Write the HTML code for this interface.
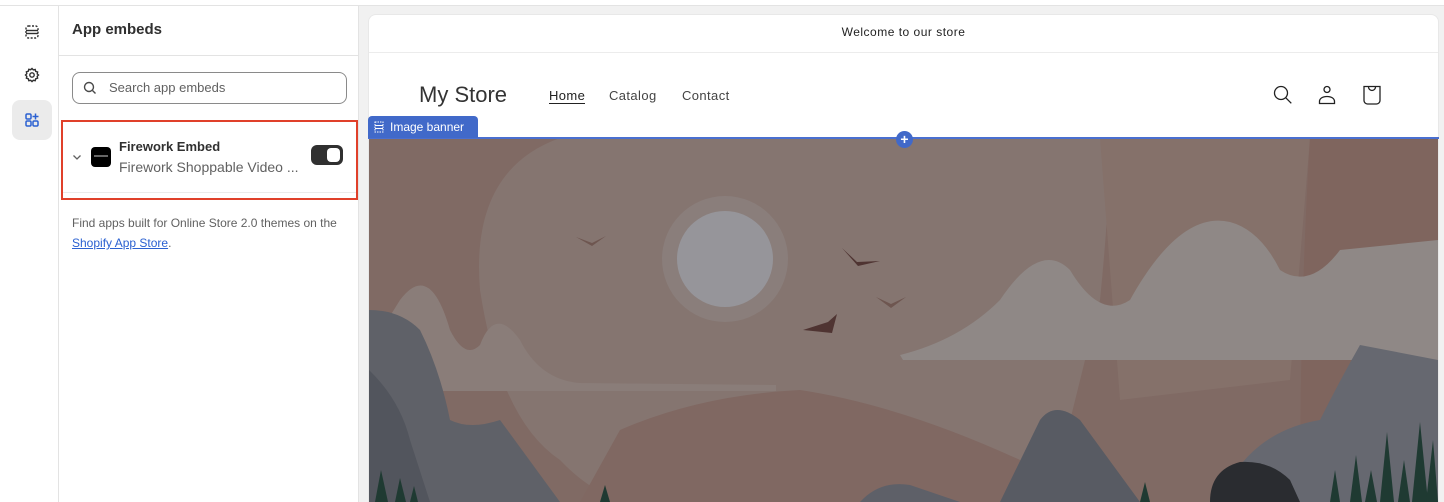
<!DOCTYPE html>
<html><head><meta charset="utf-8"><style>
*{box-sizing:border-box;margin:0;padding:0}
html,body{width:1444px;height:502px;overflow:hidden}
body{background:#f1f1f1;font-family:"Liberation Sans",sans-serif;position:relative}
.abs{position:absolute}
</style></head><body>
<div class="abs" style="left:0;top:0;width:1444px;height:6px;background:#fff;border-bottom:1px solid #e3e3e3"></div>
<!-- rail -->
<div class="abs" style="left:0;top:6px;width:59px;height:496px;background:#fff;border-right:1px solid #e3e3e3"></div>
<svg class="abs" style="left:24px;top:24px" width="16" height="16" viewBox="0 0 16 16" fill="none" stroke="#303030" stroke-width="1.4"><rect x="2" y="2" width="12" height="12" rx="2.5" stroke-dasharray="2 1.5"/><line x1="2" y1="6.5" x2="14" y2="6.5"/><line x1="2" y1="9.5" x2="14" y2="9.5"/></svg>
<svg class="abs" style="left:24px;top:67px" width="16" height="16" viewBox="0 0 16 16" fill="none" stroke="#303030" stroke-width="1.4"><path d="M8 1.5l1.3 1.4 1.9-.4.5 1.9 1.9.6-.4 1.9L14.5 8l-1.3 1.3.4 1.9-1.9.6-.5 1.9-1.9-.4L8 14.5l-1.3-1.2-1.9.4-.5-1.9-1.9-.6.4-1.9L1.5 8l1.3-1.3-.4-1.9 1.9-.6.5-1.9 1.9.4z"/><circle cx="8" cy="8" r="2.2"/></svg>
<div class="abs" style="left:12px;top:100px;width:40px;height:40px;border-radius:8px;background:#ebebeb"></div>
<svg class="abs" style="left:24px;top:112px" width="16" height="16" viewBox="0 0 16 16" fill="none" stroke="#2b61d1" stroke-width="1.5"><rect x="2" y="2" width="5" height="5" rx="1.2"/><rect x="2" y="9" width="5" height="5" rx="1.2"/><rect x="9" y="9" width="5" height="5" rx="1.2"/><path d="M11.5 1.5v6M8.5 4.5h6"/></svg>
<!-- panel -->
<div class="abs" style="left:59px;top:6px;width:300px;height:496px;background:#fff;border-right:1px solid #e3e3e3"></div>
<div class="abs" style="left:72px;top:21px;font-size:15px;font-weight:bold;color:#303030">App embeds</div>
<div class="abs" style="left:59px;top:55px;width:300px;height:1px;background:#e3e3e3"></div>
<div class="abs" style="left:72px;top:72px;width:275px;height:32px;border:1px solid #8a8a8a;border-radius:8px;"></div>
<svg class="abs" style="left:82px;top:80px" width="16" height="16" viewBox="0 0 16 16" fill="none" stroke="#4a4a4a" stroke-width="1.4"><circle cx="7" cy="7" r="4.5"/><path d="M10.5 10.5l3 3"/></svg>
<div class="abs" style="left:109px;top:80px;font-size:13px;color:#616161">Search app embeds</div>
<div class="abs" style="left:61px;top:120px;width:297px;height:80px;border:2px solid #e0402a"></div>
<div class="abs" style="left:63px;top:192px;width:293px;height:1px;background:#ebebeb"></div>
<svg class="abs" style="left:72px;top:153px" width="10" height="8" viewBox="0 0 10 8" fill="none" stroke="#616161" stroke-width="1.3"><path d="M1.5 2.5l3.5 3.5 3.5-3.5"/></svg>
<div class="abs" style="left:91px;top:147px;width:20px;height:20px;background:#000;border-radius:4px"></div>
<div class="abs" style="left:94px;top:155px;width:14px;height:2px;background:#666"></div>
<div class="abs" style="left:119px;top:139px;font-size:13px;font-weight:bold;color:#303030">Firework Embed</div>
<div class="abs" style="left:119px;top:159px;font-size:14px;color:#616161">Firework Shoppable Video ...</div>
<div class="abs" style="left:311px;top:145px;width:32px;height:20px;background:#303030;border-radius:6px"></div>
<div class="abs" style="left:327px;top:148px;width:13px;height:14px;background:#fff;border-radius:4px"></div>
<div class="abs" style="left:72px;top:213px;font-size:12px;color:#616161;line-height:20px;width:280px">Find apps built for Online Store 2.0 themes on the <span style="color:#2b61d1;text-decoration:underline">Shopify App Store</span>.</div>
<!-- preview card -->
<div class="abs" style="left:368px;top:14px;width:1071px;height:488px;background:#fff;border-radius:8px 8px 0 0;border:1px solid #e8e8e8;border-bottom:none"></div>
<div class="abs" style="left:368px;top:25px;width:1071px;text-align:center;font-size:12px;color:#222;letter-spacing:.5px">Welcome to our store</div>
<div class="abs" style="left:369px;top:52px;width:1069px;height:1px;background:#ececec"></div>
<div class="abs" style="left:419px;top:82px;font-size:22px;color:#333">My Store</div>
<div class="abs" style="left:549px;top:88px;font-size:13px;color:#222;letter-spacing:.4px;border-bottom:1px solid #222;line-height:15px">Home</div>
<div class="abs" style="left:609px;top:88px;font-size:13px;color:#444;letter-spacing:.4px">Catalog</div>
<div class="abs" style="left:682px;top:88px;font-size:13px;color:#444;letter-spacing:.4px">Contact</div>
<svg class="abs" style="left:1272px;top:84px" width="22" height="22" viewBox="0 0 22 22" fill="none" stroke="#222" stroke-width="1.3"><circle cx="9" cy="9" r="6.5"/><path d="M13.8 13.8l5.5 5.5"/></svg>
<svg class="abs" style="left:1316px;top:84px" width="22" height="22" viewBox="0 0 22 22" fill="none" stroke="#222" stroke-width="1.3"><circle cx="11" cy="5.5" r="3"/><path d="M3.5 19.5h15v-2c0-3-3-5-7.5-5s-7.5 2-7.5 5z"/></svg>
<svg class="abs" style="left:1361px;top:84px" width="22" height="22" viewBox="0 0 22 22" fill="none" stroke="#222" stroke-width="1.3"><path d="M3 2.5h16v14a3.5 3.5 0 0 1-3.5 3.5h-9A3.5 3.5 0 0 1 3 16.5z"/><path d="M7.5 3a3.5 3.5 0 0 0 7 0"/></svg>
<!-- banner -->
<svg class="abs" style="left:369px;top:138px" width="1069" height="364" viewBox="369 138 1069 364">
<rect x="369" y="138" width="1069" height="364" fill="#806a64"/>
<path d="M560 138 Q470 170 480 290 Q500 420 560 460 Q600 502 640 502 L1050 502 Q1080 380 1100 300 Q1110 200 1110 138Z" fill="#857570"/>
<path d="M1100 138 L1310 138 Q1300 260 1290 380 L1120 400 Z" fill="#85716a"/>
<path d="M1310 138 L1438 138 L1438 502 L1300 502 Q1300 300 1310 138Z" fill="#7f655e"/>
<path d="M620 430 Q700 395 800 390 Q900 405 1020 460 L1050 502 L580 502Z" fill="#806862"/>
<circle cx="725" cy="259" r="63" fill="#8a7e7b"/>
<circle cx="725" cy="259" r="48" fill="#96959a"/>
<path d="M576 237 L592 243 L606 236 L592 246Z" fill="#6e5650"/>
<path d="M842 248 L857 262 L880 261 L858 266Z" fill="#4f3432"/>
<path d="M876 297 L891 304 L906 297 L891 308Z" fill="#6e5650"/>
<path d="M803 330 L828 322 L837 314 L832 333Z" fill="#4f3432"/>
<path d="M369 350 L400 300 Q430 260 450 330 Q465 360 480 345 Q495 305 520 340 Q540 380 580 383 L776 385 L776 391 L369 391Z" fill="#8a7d79"/>
<path d="M900 355 Q960 340 1000 300 Q1040 240 1070 270 Q1100 320 1130 300 Q1180 210 1230 222 Q1260 230 1280 270 Q1310 290 1340 250 L1438 240 L1438 360 L903 360Z" fill="#8f8886"/>
<path d="M369 310 Q400 310 420 330 Q440 370 450 420 Q470 430 500 420 L560 502 L369 502Z" fill="#5f6168"/>
<path d="M369 370 Q400 400 410 440 L430 502 L369 502Z" fill="#52555d"/>
<path d="M1438 360 L1360 345 Q1340 380 1320 420 Q1260 430 1230 480 L1220 502 L1438 502Z" fill="#666870"/>
<path d="M1000 502 L1040 420 Q1055 400 1080 420 L1140 502Z" fill="#585b63"/>
<path d="M860 502 Q880 480 910 485 L960 502Z" fill="#5e6068"/>
<path d="M1210 502 Q1210 470 1240 462 Q1270 460 1290 480 L1300 502Z" fill="#2a2c30"/>
<g fill="#1f3a32"><path d="M375 502 L381 470 L388 502Z"/><path d="M395 502 L400 478 L406 502Z"/><path d="M410 502 L414 486 L418 502Z"/><path d="M600 502 L605 485 L610 502Z"/><path d="M1140 502 L1145 482 L1150 502Z"/><path d="M1330 502 L1335 470 L1340 502Z"/><path d="M1350 502 L1356 455 L1362 502Z"/><path d="M1365 502 L1371 470 L1377 502Z"/><path d="M1380 502 L1387 432 L1394 502Z"/><path d="M1398 502 L1404 460 L1410 502Z"/><path d="M1412 502 L1420 422 L1428 502Z"/><path d="M1426 502 L1433 440 L1438 502Z"/></g>
</svg>
<div class="abs" style="left:368px;top:137px;width:1071px;height:2px;background:#4a6fd0"></div>
<div class="abs" style="left:368px;top:116px;width:110px;height:22px;background:#4169c9;border-radius:4px 4px 0 0;color:#fff;font-size:12px;line-height:22px;padding-left:22px">Image banner</div>
<svg class="abs" style="left:374px;top:121px" width="10" height="12" viewBox="0 0 10 12" fill="none" stroke="#fff" stroke-width="1"><rect x="1" y="1" width="8" height="10" stroke-dasharray="1.5 1"/><line x1="1" y1="4.5" x2="9" y2="4.5"/><line x1="1" y1="7.5" x2="9" y2="7.5"/></svg>
<div class="abs" style="left:896px;top:131px;width:17px;height:17px;border-radius:50%;background:#4169c9;color:#fff;font-size:14px;line-height:16px;text-align:center;font-weight:bold">+</div>
</body></html>
